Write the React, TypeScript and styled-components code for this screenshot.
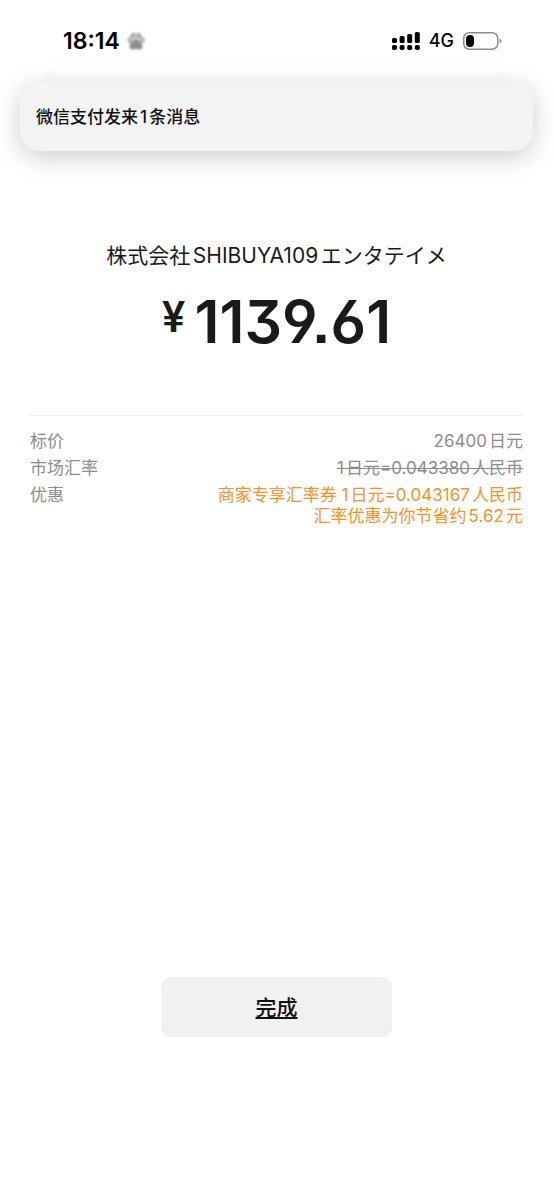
import React from "react";
import styled, { createGlobalStyle } from "styled-components";

const GlobalStyle = createGlobalStyle`
  * { box-sizing: border-box; }
  body {
    margin: 0;
    background: #fff;
    color: #1a1a1a;
    font-family: Inter, "Noto Sans CJK SC", sans-serif;
    text-autospace: normal;
  }
`;

const Screen = styled.div`
  display: flex;
  flex-direction: column;
  min-height: 100vh;
  padding-bottom: 163px;
`;

const StatusBar = styled.header`
  display: flex;
  align-items: center;
  justify-content: space-between;
  height: 81px;
  padding: 0 51px 0 63px;
  color: #000;
`;

const StatusGroup = styled.div<{ $gap: number }>`
  display: flex;
  align-items: center;
  gap: ${(p) => p.$gap}px;
`;

const Clock = styled.time`
  font-size: 23px;
  line-height: 28px;
  font-weight: 600;
`;

const Network = styled.span`
  font-size: 18px;
  line-height: 28px;
  font-weight: 500;
`;

const Notification = styled.section`
  margin: 0 20px;
  padding: 24px 16px 22px;
  border-radius: 20px;
  background: #f3f3f3;
  box-shadow: 0 6px 26px rgba(0, 0, 0, 0.2);
  color: #111;
  font-size: 17px;
  line-height: 24px;
  font-weight: 500;
`;

const Payment = styled.main`
  flex: 1;
  display: flex;
  flex-direction: column;
  padding: 89px 30px 0;
`;

const Merchant = styled.h1`
  margin: 0;
  text-align: center;
  font-family: Inter, "Noto Sans CJK JP", sans-serif;
  font-size: 21px;
  line-height: 32px;
  font-weight: 400;
`;

const Amount = styled.p`
  display: flex;
  justify-content: center;
  align-items: flex-start;
  gap: 9px;
  margin: 16px 0 59px;
  font-size: 59px;
  line-height: 68px;
  font-weight: 600;
  font-feature-settings: "ss01", "ss07", "cv03", "cv04", "cv09";
`;

const Currency = styled.span`
  font-size: 42px;
  line-height: 58px;
`;

const Details = styled.dl`
  display: flex;
  flex-direction: column;
  gap: 6px;
  margin: 0;
  padding-top: 15px;
  border-top: 1px solid #ededed;
  color: #8c8c8c;
  font-size: 17px;
  line-height: 21px;
`;

const DetailRow = styled.div`
  display: flex;
  justify-content: space-between;
`;

const Term = styled.dt``;

const Value = styled.dd<{ $tone?: "struck" | "offer" }>`
  margin: 0;
  text-align: right;
  color: ${(p) => (p.$tone === "offer" ? "#f5922a" : "inherit")};
  text-decoration: ${(p) => (p.$tone === "struck" ? "line-through" : "none")};
`;

const DoneButton = styled.button`
  align-self: center;
  width: 231px;
  height: 60px;
  margin-top: auto;
  border: 0;
  border-radius: 9px;
  padding: 2px 0 0;
  background: #f1f1f1;
  color: #111;
  font-family: inherit;
  font-size: 21px;
  line-height: 30px;
  font-weight: 500;
  text-decoration: underline;
  text-decoration-skip-ink: none;
`;

const PawIcon = styled.svg`
  filter: blur(1px);
`;

function Paw() {
  return (
    <PawIcon width="20" height="20" viewBox="0 0 20 20" fill="#8d8d8d" aria-hidden="true">
      <ellipse cx="10" cy="9" rx="8" ry="7" opacity="0.35" />
      <ellipse cx="3.6" cy="9" rx="2.4" ry="3" opacity="0.5" />
      <ellipse cx="7.2" cy="4.6" rx="2.4" ry="3" opacity="0.6" />
      <ellipse cx="12.8" cy="4.6" rx="2.4" ry="3" opacity="0.6" />
      <ellipse cx="16.4" cy="9" rx="2.4" ry="3" opacity="0.5" />
      <path d="M10 8.5C7.5 8.5 3.5 13 3.5 16c0 3 4 2.2 6.500 2.200s6.500.8 6.500-2.200c0-3-4-7.500-6.500-7.500z" />
    </PawIcon>
  );
}

function Signal() {
  const heights = [5, 7, 9, 11];
  return (
    <svg width="28" height="20" viewBox="0 0 28 20" aria-hidden="true">
      {heights.map((h, i) => (
        <React.Fragment key={h}>
          <rect x={i * 7.6} y={12 - h} width="5" height={h} rx="1.600" />
          <rect x={i * 7.6} y="14" width="5" height="5" rx="1.800" />
        </React.Fragment>
      ))}
    </svg>
  );
}

function Battery() {
  return (
    <svg width="39" height="20" viewBox="0 0 39 20" aria-hidden="true">
      <rect x="0.75" y="1.75" width="34" height="16.500" rx="5.500" fill="none" stroke="#8c8c8c" strokeWidth="1.500" />
      <rect x="3" y="4" width="8" height="12" rx="4" fill="#000" />
      <path d="M36.600 7.400q1.900.8 1.900 2.600t-1.900 2.600z" fill="#8c8c8c" />
    </svg>
  );
}

export default function App() {
  return (
    <Screen lang="zh-CN">
      <GlobalStyle />
      <StatusBar>
        <StatusGroup $gap={6}>
          <Clock>18:14</Clock>
          <Paw />
        </StatusGroup>
        <StatusGroup $gap={9}>
          <Signal />
          <Network>4G</Network>
          <Battery />
        </StatusGroup>
      </StatusBar>
      <Notification>微信支付发来1条消息</Notification>
      <Payment>
        <Merchant lang="ja">株式会社SHIBUYA109エンタテイメ</Merchant>
        <Amount>
          <Currency>¥</Currency>
          <span>1139.61</span>
        </Amount>
        <Details>
          <DetailRow>
            <Term>标价</Term>
            <Value>26400日元</Value>
          </DetailRow>
          <DetailRow>
            <Term>市场汇率</Term>
            <Value $tone="struck">1日元=0.043380人民币</Value>
          </DetailRow>
          <DetailRow>
            <Term>优惠</Term>
            <Value $tone="offer">
              商家专享汇率券 1日元=0.043167人民币
              <br />
              汇率优惠为你节省约5.62元
            </Value>
          </DetailRow>
        </Details>
        <DoneButton type="button">完成</DoneButton>
      </Payment>
    </Screen>
  );
}
